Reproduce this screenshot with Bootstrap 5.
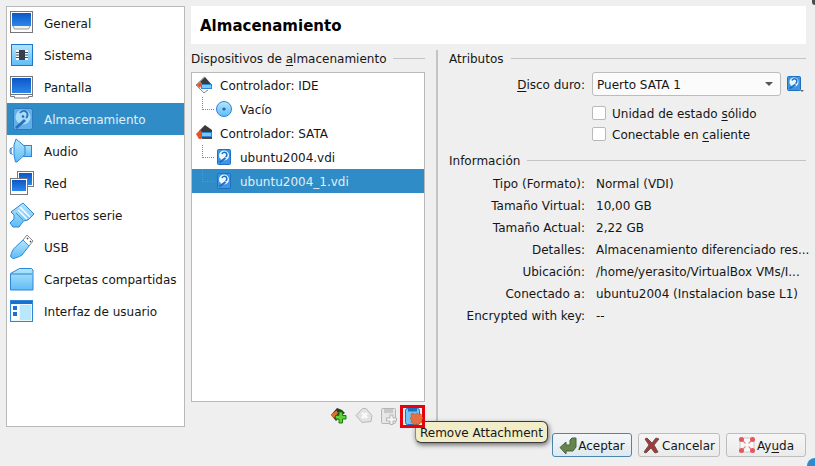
<!DOCTYPE html>
<html lang="es">
<head>
<meta charset="UTF-8">
<title>Almacenamiento</title>
<link href="https://cdn.jsdelivr.net/npm/bootstrap@5.3.0/dist/css/bootstrap.min.css" rel="stylesheet">
<style>
html, body { height: 466px; overflow: hidden; }
body { background: #efefef; color: #161616; font: 12px/17px "DejaVu Sans", sans-serif; }
.vb-root { width: 815px; height: 466px; padding: 6px 9px 0 6px; }
.vb-defs { width: 0; height: 0; display: block; }
.vb-main { height: 421px; }
.vb-side { width: 179px; height: 421px; background: #fff; border: 1px solid #b9b9b9; flex: none; }
.vb-side-item { height: 32px; white-space: nowrap; padding-top: 2px; }
.vb-side-item svg { width: 32px; height: 32px; flex: none; margin: -2px 5px 0 0; }
.vb-side-item.is-on, .vb-tree-row.is-on { background: #308cc6; color: #e2eef6; }
.vb-content { width: 615px; margin-left: 6px; }
.vb-title { height: 38px; background: #fff; color: #000; font-size: 15px; font-weight: 700; padding: 2px 0 0 9px; margin-bottom: 6px; }
.vb-split { height: 375px; }
.vb-left { width: 234px; flex: none; }
.vb-divider { width: 2px; background: #c4c4c4; margin: 0 11px; flex: none; }
.vb-group { height: 17px; white-space: nowrap; padding-top: 2px; }
.vb-group::after { content: ""; flex: 1; border-top: 1px solid #c4c4c4; margin: -2px 0 0 7px; }
.vb-tree { height: 330px; margin-top: 5px; background: #fff; border: 1px solid #b9b9b9; }
.vb-tree-row { height: 24px; padding: 2px 0 0 3px; position: relative; white-space: nowrap; }
.vb-tree-row svg { width: 18px; height: 18px; flex: none; margin: -2px 7px 0 0; }
.vb-leaf { padding-left: 23px; }
.vb-branch { position: absolute; left: 10px; top: 0; width: 12px; height: 13px; border-left: 1px dotted #888; border-bottom: 1px dotted #888; }
.vb-tools { height: 23px; margin-top: 3px; }
.vb-tool { width: 25px; height: 23px; padding: 2px 0 0 5px; }
.vb-tool svg { width: 18px; height: 18px; display: block; }
.vb-tool-on { border: 3px solid #e8000b; padding: 0 0 0 2px; position: relative; z-index: 6; }
.vb-right { width: 357px; flex: none; }
.vb-combo-row { height: 24px; margin-top: 5px; }
.vb-combo { width: 189px; height: 24px; background: #fbfbfb; border: 1px solid #bcbcbc; border-radius: 3px; padding: 2px 7px 0 4px; }
.vb-caret { border: 4px solid transparent; border-top-color: #555; border-bottom: 0; margin-top: -2px; }
.vb-combo-label { width: 143px; text-align: right; padding: 2px 7px 0 0; flex: none; }
.vb-combo-row svg { width: 18px; height: 18px; margin-left: 5px; }
.vb-check { width: 14px; height: 14px; background: #fff; border: 1px solid #b9b9b9; border-radius: 2px; margin: -2px 6px 0 0; flex: none; }
.vb-check-row { height: 20px; padding: 2px 0 0 143px; margin-top: 1px; }
.vb-checks { margin-top: 7px; }
.vb-info-head { margin-top: 8px; }
.vb-info { margin-top: 3px; }
.vb-info-row { height: 22px; white-space: nowrap; padding-top: 2px; }
.vb-info-label { width: 147px; text-align: right; padding-right: 11px; flex: none; }
.vb-foot { padding-top: 6px; gap: 6px; }
.vb-btn { width: 80px; height: 24px; background: linear-gradient(#f6f6f6, #ebebeb); border: 1px solid #bdbdbd; border-radius: 3px; color: #161616; font: inherit; padding: 2px 0 0; }
.vb-btn svg { width: 18px; height: 18px; margin: -2px 1px 0 0; }
.vb-btn-wide { width: 82px; }
.vb-btn-main { border-color: #4a86ad; background: linear-gradient(#f3f7fa, #dfe8ef); }
.vb-tip { position: absolute; left: 415px; top: 421px; height: 22px; padding: 2px 4px 0; background: #f1edc9; border: 1px solid #3a3a3a; border-left-color: #8d8a72; border-radius: 6px; box-shadow: 1px 2px 5px rgba(0,0,0,.55); white-space: nowrap; z-index: 5; }
.vb-corner-br { position: absolute; right: 0; bottom: 0; width: 8px; height: 8px; background: #2c8ad0; border-top-left-radius: 8px; }
.vb-corner-tr { position: absolute; right: 0; top: 0; width: 3px; height: 5px; background: #4a4a4a; border-bottom-left-radius: 3px; }
u { text-underline-offset: 2px; }
</style>
</head>
<body>
<svg class="vb-defs">
  <defs>
    <linearGradient id="gLight" x1="0" y1="0" x2="0" y2="1"><stop offset="0" stop-color="#b4e6fd"/><stop offset="1" stop-color="#5fbcf5"/></linearGradient>
    <linearGradient id="gDeep" x1="0" y1="0" x2="0" y2="1"><stop offset="0" stop-color="#0d56c6"/><stop offset="1" stop-color="#2b88ec"/></linearGradient>
  </defs>
</svg>
<div class="vb-root">
  <div class="vb-main d-flex">
    <div class="vb-side">
      <div class="vb-side-item d-flex align-items-center">
        <svg viewBox="0 0 32 32"><rect x="3.5" y="4.5" width="22" height="21" fill="#fff" stroke="#777"/><rect x="5" y="6" width="19" height="13" fill="url(#gDeep)"/><path d="M6 19l1.5 3h14l1.5-3" fill="#f2f2f2" stroke="#999"/></svg>General
      </div>
      <div class="vb-side-item d-flex align-items-center">
        <svg viewBox="0 0 32 32"><rect x="4.5" y="5.5" width="21" height="21" fill="url(#gLight)" stroke="#1f78d0"/><rect x="9" y="11" width="12" height="10" fill="#f4f8fb"/><rect x="12" y="11" width="6" height="10" fill="#33404e"/><path d="M9 13.5h3M9 16h3M9 18.500h3M18 13.500h3M18 16h3M18 18.500h3" stroke="#46525f"/></svg>Sistema
      </div>
      <div class="vb-side-item d-flex align-items-center">
        <svg viewBox="0 0 32 32"><rect x="3.500" y="5.500" width="22" height="18" fill="#fff" stroke="#777"/><rect x="5" y="7" width="19" height="15" fill="url(#gDeep)"/><path d="M3.500 23.500h22v2h-4v1.500h-14v-1.500h-4z" fill="#fff" stroke="#777"/></svg>Pantalla
      </div>
      <div class="vb-side-item is-on d-flex align-items-center">
        <svg viewBox="0 0 32 32"><rect x="6.500" y="5.500" width="19" height="21" rx="2" fill="#62aee8" stroke="#2b78c4"/><circle cx="16" cy="14" r="7.500" fill="#a8dcf7"/><path d="M13 10a4 4 0 1 1 6 5" fill="none" stroke="#2b78c4" stroke-width="2"/><circle cx="16" cy="13.500" r="1.300" fill="#2467ae"/><path d="M9 25l9-8" stroke="#2671bc" stroke-width="3"/></svg>Almacenamiento
      </div>
      <div class="vb-side-item d-flex align-items-center">
        <svg viewBox="0 0 32 32"><rect x="16.500" y="10.500" width="8" height="11" fill="url(#gLight)" stroke="#2c86d8"/><path d="M9 4l9 7.500v8L10 27H8.500L7 20V10z" fill="url(#gLight)" stroke="#2c86d8"/><path d="M5.500 12a6 6 0 0 0 0 8M3.500 13a8 8 0 0 0 0 6" fill="none" stroke="#2c86d8"/></svg>Audio
      </div>
      <div class="vb-side-item d-flex align-items-center">
        <svg viewBox="0 0 32 32"><rect x="10.500" y="4.500" width="16" height="15" fill="#fff" stroke="#777"/><rect x="12" y="6" width="13" height="12" fill="url(#gDeep)"/><rect x="3.500" y="11.500" width="17" height="16" fill="#fff" stroke="#777"/><rect x="5" y="13" width="14" height="11" fill="url(#gDeep)"/></svg>Red
      </div>
      <div class="vb-side-item d-flex align-items-center">
        <svg viewBox="0 0 32 32"><path d="M16 4l11 11-6 6-4.500 1L12 28H6l-3-4 4-4v-4l-3-3z" fill="url(#gLight)" stroke="#2c86d8"/><path d="M13 8l10 10M11 11l9 9" stroke="#fff" stroke-width="1.500"/><path d="M9 14l7 7" stroke="#3d93dc"/></svg>Puertos serie
      </div>
      <div class="vb-side-item d-flex align-items-center">
        <svg viewBox="0 0 32 32"><path d="M16 9l6 6-7 9c-3 2-6 3-9 3.500l-2.500-2c1-4 2-7 5-9.500z" fill="url(#gLight)" stroke="#2c86d8"/><path d="M20 4l6 6-4 5-6-6z" fill="#fff" stroke="#888"/><path d="M20 7l1 1M23 10l1 1" stroke="#444" stroke-width="1.500"/></svg>USB
      </div>
      <div class="vb-side-item d-flex align-items-center">
        <svg viewBox="0 0 32 32"><path d="M3.500 10.500l9-5h12l1.500 1.500v20H3.500z" fill="url(#gLight)" stroke="#2c86d8"/><path d="M4 11h21" stroke="#2c86d8"/></svg>Carpetas compartidas
      </div>
      <div class="vb-side-item d-flex align-items-center">
        <svg viewBox="0 0 32 32"><rect x="3.500" y="5.500" width="22" height="21" fill="#e8f6fe" stroke="#2c86d8"/><rect x="4" y="6" width="21" height="3" fill="#1b6fd0"/><rect x="5" y="10" width="7" height="15" fill="#fff"/><rect x="6" y="11" width="4" height="4" fill="#1b6fd0"/><rect x="6" y="17" width="4" height="4" fill="#1b6fd0"/><rect x="13" y="10" width="11" height="15" fill="#b9e7fb"/></svg>Interfaz de usuario
      </div>
    </div>
    <div class="vb-content">
      <div class="vb-title d-flex align-items-center">Almacenamiento</div>
      <div class="vb-split d-flex">
        <div class="vb-left">
          <div class="vb-group d-flex align-items-center"><span>Dispositivos de <u>a</u>lmacenamiento</span></div>
          <div class="vb-tree">
            <div class="vb-tree-row d-flex align-items-center">
              <svg viewBox="0 0 18 18"><path d="M9.500 1L1 9l8 8 4-3" fill="#f6f6f6" stroke="#888"/><path d="M10 1L5 6l3 3h9z" fill="#3b3b3b"/><path d="M1.500 9L5 6l2 2-2 4z" fill="#e2552a"/><rect x="6.500" y="8.500" width="10" height="4" fill="#7cc8f4" stroke="#2c86d8"/></svg>Controlador: IDE
            </div>
            <div class="vb-tree-row vb-leaf d-flex align-items-center"><span class="vb-branch"></span>
              <svg viewBox="0 0 18 18"><circle cx="9" cy="9" r="7.500" fill="url(#gLight)" stroke="#2c86d8"/><circle cx="9" cy="9" r="1.600" fill="#1f5fb0"/></svg>Vacío
            </div>
            <div class="vb-tree-row d-flex align-items-center">
              <svg viewBox="0 0 18 18"><path d="M10 1L4 7l3 3h10V6z" fill="#3a3a3a"/><path d="M1 10l4-4 3 3-2 6h-2z" fill="#e2552a"/><path d="M6 13h9l2-1v3H7z" fill="#4a4a4a"/><rect x="6.500" y="8.500" width="10" height="4" fill="#7cc8f4" stroke="#2c86d8"/></svg>Controlador: SATA
            </div>
            <div class="vb-tree-row vb-leaf d-flex align-items-center"><span class="vb-branch"></span>
              <svg viewBox="0 0 18 18"><rect x="2.500" y="1.500" width="13" height="15" rx="1" fill="#3e95e4" stroke="#1f6fc0"/><circle cx="9" cy="7.500" r="5" fill="#e8f6fd"/><path d="M7 6a2.500 2.500 0 1 1 3.500 3" fill="none" stroke="#1f6fc0" stroke-width="1.500"/><path d="M4.500 14.500l6-4.500" stroke="#1f6fc0" stroke-width="2"/></svg>ubuntu2004.vdi
            </div>
            <div class="vb-tree-row vb-leaf is-on d-flex align-items-center"><span class="vb-branch"></span>
              <svg viewBox="0 0 18 18"><rect x="2.500" y="1.500" width="13" height="15" rx="1" fill="#3e95e4" stroke="#1f6fc0"/><circle cx="9" cy="7.500" r="5" fill="#e8f6fd"/><path d="M7 6a2.500 2.500 0 1 1 3.500 3" fill="none" stroke="#1f6fc0" stroke-width="1.500"/><path d="M4.500 14.500l6-4.500" stroke="#1f6fc0" stroke-width="2"/></svg>ubuntu2004_1.vdi
            </div>
          </div>
          <div class="vb-tools d-flex justify-content-end">
            <div class="vb-tool"><svg viewBox="0 0 18 18"><path d="M7 1L1 8l5 6 6-6 3-2-3-3z" fill="#2e3a20"/><path d="M6.500 3.500L1 8l3 3 4-5z" fill="#e8702a"/><path d="M9 5h3.500v3.500H16V12h-3.500v4H9v-4H5.500V8.500H9z" fill="#5fd13a" stroke="#1f7a10"/></svg></div>
            <div class="vb-tool"><svg viewBox="0 0 18 18"><path d="M7.500 1.500L1 8.500l6 7 9-1 1-6-6-7z" fill="#e2e2e2" stroke="#b8b8b8"/><path d="M7 6l5 5M12 6l-5 5" stroke="#fbfbfb" stroke-width="2.500"/></svg></div>
            <div class="vb-tool"><svg viewBox="0 0 18 18"><rect x="1.500" y="1.500" width="14" height="15" rx="1" fill="#e6e6e6" stroke="#b5b5b5"/><rect x="4" y="2" width="9" height="4" fill="#c8c8c8"/><path d="M10 8h3v3h3.500v3H13v3.500h-3V14H6.500v-3H10z" fill="#f5f5f5" stroke="#b5b5b5"/></svg></div>
            <div class="vb-tool vb-tool-on"><svg viewBox="0 0 18 18"><rect x="0.500" y="0.500" width="14" height="16" rx="2" fill="#74c2f7" stroke="#1f6fc0"/><rect x="3" y="1" width="9" height="2.500" fill="#1f6fc0"/><path d="M8 5l2 1.500L12 5l1.500 1.500 2.500-.5.500 2.500L18 10l-1.500 2 .5 2.500-2.500.5-1 2-2-1-2 1-1.500-2-2-.5.500-2.500L5 10l1.500-1.500L6 6z" fill="#e4713f" stroke="#bd5026" stroke-width=".6"/></svg></div>
          </div>
        </div>
        <div class="vb-divider"></div>
        <div class="vb-right">
          <div class="vb-group d-flex align-items-center"><span>Atributos</span></div>
          <div class="vb-combo-row d-flex align-items-center">
            <div class="vb-combo-label"><u>D</u>isco duro:</div>
            <div class="vb-combo d-flex align-items-center justify-content-between">Puerto SATA 1<span class="vb-caret"></span></div>
            <svg viewBox="0 0 18 18"><rect x="1.500" y="1.500" width="13" height="14" rx="1" fill="#3e95e4" stroke="#1f6fc0"/><circle cx="8" cy="7" r="4.500" fill="#e8f6fd"/><path d="M6 5.500a2.500 2.500 0 1 1 3.500 3" fill="none" stroke="#1f6fc0" stroke-width="1.500"/><path d="M3.500 13.500l6-4" stroke="#1f6fc0" stroke-width="2"/><path d="M14 15h4l-2 2z" fill="#666"/></svg>
          </div>
          <div class="vb-checks">
            <div class="vb-check-row d-flex align-items-center"><span class="vb-check"></span><span>Unidad de estado <u>s</u>ólido</span></div>
            <div class="vb-check-row d-flex align-items-center"><span class="vb-check"></span><span>Conectable en <u>c</u>aliente</span></div>
          </div>
          <div class="vb-group vb-info-head d-flex align-items-center"><span>Información</span></div>
          <div class="vb-info">
            <div class="vb-info-row d-flex align-items-center"><div class="vb-info-label">Tipo (Formato):</div>Normal (VDI)</div>
            <div class="vb-info-row d-flex align-items-center"><div class="vb-info-label">Tamaño Virtual:</div>10,00 GB</div>
            <div class="vb-info-row d-flex align-items-center"><div class="vb-info-label">Tamaño Actual:</div>2,22 GB</div>
            <div class="vb-info-row d-flex align-items-center"><div class="vb-info-label">Detalles:</div>Almacenamiento diferenciado res...</div>
            <div class="vb-info-row d-flex align-items-center"><div class="vb-info-label">Ubicación:</div>/home/yerasito/VirtualBox VMs/I...</div>
            <div class="vb-info-row d-flex align-items-center"><div class="vb-info-label">Conectado a:</div>ubuntu2004 (Instalacion base L1)</div>
            <div class="vb-info-row d-flex align-items-center"><div class="vb-info-label">Encrypted with key:</div>--</div>
          </div>
        </div>
      </div>
    </div>
  </div>
  <div class="vb-foot d-flex justify-content-end">
    <button class="vb-btn vb-btn-main d-flex align-items-center justify-content-center"><svg viewBox="0 0 18 18"><path d="M1 11.500L7 6v3h4V4l2-2h4v9l-3 4H7v3z" fill="#66854d" stroke="#48623a"/></svg>Aceptar</button>
    <button class="vb-btn vb-btn-wide d-flex align-items-center justify-content-center"><svg viewBox="0 0 18 18"><path d="M4 2l5 5 4-5 3 1-5 6 4 7-3 1-4-5-5 5-2-1 5-7-4-6z" fill="#a33a3a" stroke="#6f5050"/></svg>Cancelar</button>
    <button class="vb-btn d-flex align-items-center justify-content-center"><svg viewBox="0 0 18 18"><rect x="2" y="2" width="14" height="14" fill="#f8f8f8" stroke="#c8c8c8"/><path d="M5 5l2.500 2.500M13 5l-2.500 2.500M5 13l2.500-2.500M13 13l-2.500-2.500" stroke="#e88a8c" stroke-width="1.200"/><circle cx="3.500" cy="3.500" r="2.500" fill="#e2585c"/><circle cx="14.500" cy="3.500" r="2.500" fill="#e2585c"/><circle cx="3.500" cy="14.500" r="2.500" fill="#e2585c"/><circle cx="14.500" cy="14.500" r="2.500" fill="#e2585c"/></svg>Ay<u>u</u>da</button>
  </div>
</div>
<div class="vb-tip d-flex align-items-center">Remove Attachment</div>
<div class="vb-corner-tr"></div>
<div class="vb-corner-br"></div>
</body>
</html>
